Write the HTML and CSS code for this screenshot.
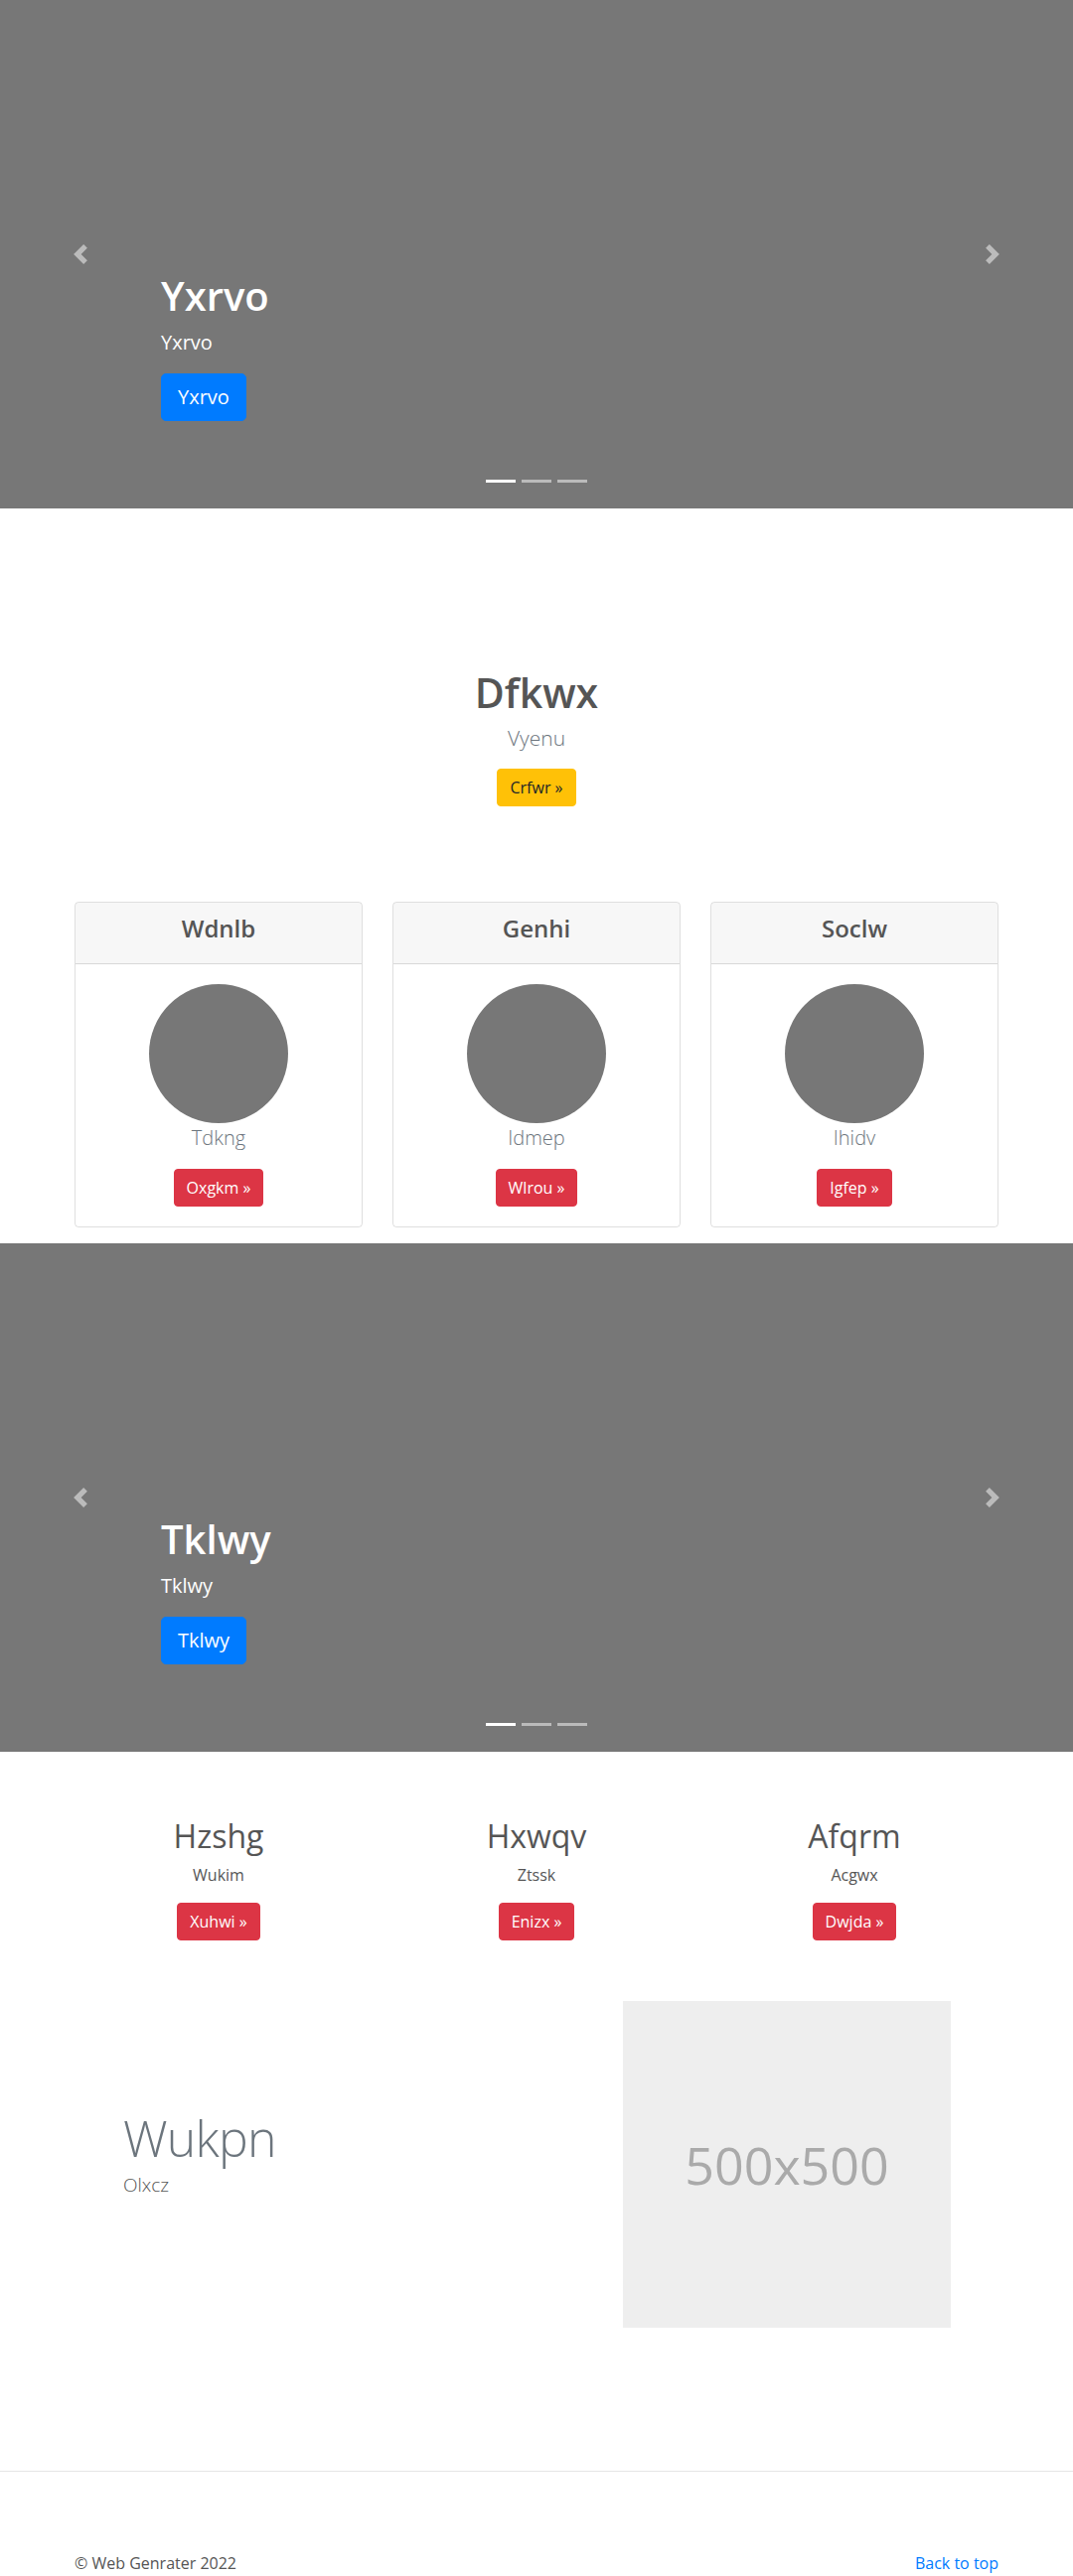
FILE: index.html
```html
<!DOCTYPE html>
<html lang="en">
<head>
<meta charset="utf-8">
<title>Carousel</title>
<link rel="stylesheet" href="styles.css">
</head>
<body>
<main>
  <section class="carousel">
    <div class="caption">
      <h1 class="caption-title">Yxrvo</h1>
      <p class="caption-text">Yxrvo</p>
      <a class="btn btn-lg btn-primary" href="#">Yxrvo</a>
    </div>
    <a class="control control-prev" href="#"><svg viewBox="0 0 8 8" width="20" height="20"><path d="M5.25 0l-4 4 4 4 1.5-1.5L4.25 4l2.5-2.5L5.25 0z"/></svg></a>
    <a class="control control-next" href="#"><svg viewBox="0 0 8 8" width="20" height="20"><path d="M2.75 0l-1.5 1.5L3.75 4l-2.5 2.5L2.75 8l4-4-4-4z"/></svg></a>
    <ol class="indicators"><li class="active"></li><li></li><li></li></ol>
  </section>

  <section class="hero">
    <h1 class="hero-title">Dfkwx</h1>
    <p class="hero-lead">Vyenu</p>
    <a class="btn btn-warning" href="#">Crfwr &raquo;</a>
  </section>

  <section class="container cards">
    <div class="card">
      <div class="card-header"><h4>Wdnlb</h4></div>
      <div class="card-body">
        <div class="circle"></div>
        <p class="lead">Tdkng</p>
        <a class="btn btn-danger" href="#">Oxgkm &raquo;</a>
      </div>
    </div>
    <div class="card">
      <div class="card-header"><h4>Genhi</h4></div>
      <div class="card-body">
        <div class="circle"></div>
        <p class="lead">Idmep</p>
        <a class="btn btn-danger" href="#">Wlrou &raquo;</a>
      </div>
    </div>
    <div class="card">
      <div class="card-header"><h4>Soclw</h4></div>
      <div class="card-body">
        <div class="circle"></div>
        <p class="lead">Ihidv</p>
        <a class="btn btn-danger" href="#">Igfep &raquo;</a>
      </div>
    </div>
  </section>

  <section class="carousel">
    <div class="caption">
      <h1 class="caption-title">Tklwy</h1>
      <p class="caption-text">Tklwy</p>
      <a class="btn btn-lg btn-primary" href="#">Tklwy</a>
    </div>
    <a class="control control-prev" href="#"><svg viewBox="0 0 8 8" width="20" height="20"><path d="M5.25 0l-4 4 4 4 1.5-1.5L4.25 4l2.5-2.5L5.25 0z"/></svg></a>
    <a class="control control-next" href="#"><svg viewBox="0 0 8 8" width="20" height="20"><path d="M2.75 0l-1.5 1.5L3.75 4l-2.5 2.5L2.75 8l4-4-4-4z"/></svg></a>
    <ol class="indicators"><li class="active"></li><li></li><li></li></ol>
  </section>

  <section class="container marketing">
    <div class="col">
      <h2>Hzshg</h2>
      <p>Wukim</p>
      <a class="btn btn-danger" href="#">Xuhwi &raquo;</a>
    </div>
    <div class="col">
      <h2>Hxwqv</h2>
      <p>Ztssk</p>
      <a class="btn btn-danger" href="#">Enizx &raquo;</a>
    </div>
    <div class="col">
      <h2>Afqrm</h2>
      <p>Acgwx</p>
      <a class="btn btn-danger" href="#">Dwjda &raquo;</a>
    </div>
  </section>

  <section class="container featurette">
    <div class="featurette-text">
      <h2 class="featurette-heading">Wukpn</h2>
      <p class="featurette-lead">Olxcz</p>
    </div>
    <div class="placeholder">500x500</div>
  </section>

  <hr class="divider">

  <footer class="container footer">
    <p>&copy; Web Genrater 2022</p>
    <a href="#">Back to top</a>
  </footer>
</main>
</body>
</html>
```

FILE: styles.css
```css
* { box-sizing: border-box; }

body {
  margin: 0;
  font-family: "Open Sans", "Noto Sans", "Liberation Sans", sans-serif;
  font-size: 16px;
  line-height: 1.5;
  color: #555;
  background: #fff;
}

h1, h2, h4, p { margin: 0; }

a { text-decoration: none; }

.container {
  width: 930px;
  margin: 0 auto;
}

/* Buttons */
.btn {
  display: inline-block;
  font-size: 16px;
  line-height: 24px;
  padding: 6px 12px;
  border: 1px solid transparent;
  border-radius: 4px;
  font-weight: 400;
}
.btn-lg {
  font-size: 20px;
  line-height: 30px;
  padding: 8px 16px;
  border-radius: 5px;
}
.btn-primary { background: #007bff; border-color: #007bff; color: #fff; }
.btn-warning { background: #ffc107; border-color: #ffc107; color: #212529; }
.btn-danger { background: #dc3545; border-color: #dc3545; color: #fff; }

/* Carousel */
.carousel {
  position: relative;
  height: 512px;
  background: #777;
  display: flex;
  flex-direction: column;
  justify-content: flex-end;
  padding: 0 15% 88px;
  color: #fff;
}
.caption {
  display: flex;
  flex-direction: column;
  align-items: flex-start;
}
.caption-title {
  font-size: 40px;
  line-height: 48px;
  font-weight: 600;
  margin-bottom: 8px;
}
.caption-text {
  font-size: 20px;
  line-height: 30px;
  margin-bottom: 16px;
}
.control {
  position: absolute;
  top: 0;
  bottom: 0;
  width: 15%;
  display: flex;
  align-items: center;
  justify-content: center;
}
.control svg { fill: #fff; opacity: .5; display: block; }
.control-prev { left: 0; }
.control-next { right: 0; }
.indicators {
  position: absolute;
  left: 0;
  right: 0;
  bottom: 26px;
  margin: 0;
  padding: 0;
  list-style: none;
  display: flex;
  justify-content: center;
  gap: 6px;
}
.indicators li {
  width: 30px;
  height: 3px;
  background: rgba(255, 255, 255, .5);
}
.indicators li.active { background: #fff; }

/* Hero */
.hero {
  text-align: center;
  padding-top: 160px;
}
.hero-title {
  font-size: 41px;
  line-height: 50px;
  font-weight: 600;
  color: #555;
  margin-bottom: 5px;
}
.hero-lead {
  font-size: 21px;
  line-height: 33px;
  font-weight: 300;
  color: #6c757d;
  margin-bottom: 14px;
}

/* Cards */
.cards {
  display: grid;
  grid-template-columns: repeat(3, 1fr);
  gap: 30px;
  margin-top: 96px;
  margin-bottom: 16px;
}
.card {
  border: 1px solid rgba(0, 0, 0, .125);
  border-radius: 4px;
  overflow: hidden;
}
.card-header {
  background: rgba(0, 0, 0, .03);
  border-bottom: 1px solid rgba(0, 0, 0, .125);
  padding: 12px 20px;
  text-align: center;
}
.card-header h4 {
  font-size: 24px;
  line-height: 28.8px;
  font-weight: 600;
  color: #555;
  margin-bottom: 8px;
}
.card-body {
  padding: 20px;
  text-align: center;
}
.circle {
  width: 140px;
  height: 140px;
  border-radius: 50%;
  background: #777;
  margin: 0 auto;
}
.lead {
  font-size: 20px;
  line-height: 30px;
  font-weight: 300;
  color: #6c757d;
  margin-bottom: 16px;
}

/* Marketing */
.marketing {
  display: grid;
  grid-template-columns: repeat(3, 1fr);
  gap: 30px;
  text-align: center;
  margin-top: 66px;
}
.marketing h2 {
  font-size: 32px;
  line-height: 38.4px;
  font-weight: 500;
  color: #555;
  margin-bottom: 8px;
}
.marketing p {
  margin-bottom: 16px;
}

/* Featurette */
.featurette {
  display: flex;
  align-items: center;
  margin-top: 61px;
}
.featurette-text {
  flex: 1;
  padding-left: 49px;
}
.featurette-heading {
  font-size: 50px;
  line-height: 1;
  font-weight: 300;
  letter-spacing: -0.8px;
  color: #6c757d;
  margin-bottom: 7px;
}
.featurette-lead {
  font-size: 19px;
  line-height: 30px;
  font-weight: 300;
  color: #555;
  margin-bottom: 16px;
}
.placeholder {
  width: 330px;
  height: 329px;
  margin-right: 48px;
  background: #eee;
  color: #aaa;
  font-size: 52px;
  display: flex;
  align-items: center;
  justify-content: center;
}

/* Divider & footer */
.divider {
  border: 0;
  border-top: 1px solid rgba(0, 0, 0, .1);
  margin: 144px 0 80px;
}
.footer {
  display: flex;
  justify-content: space-between;
}
.footer a { color: #007bff; }
```
